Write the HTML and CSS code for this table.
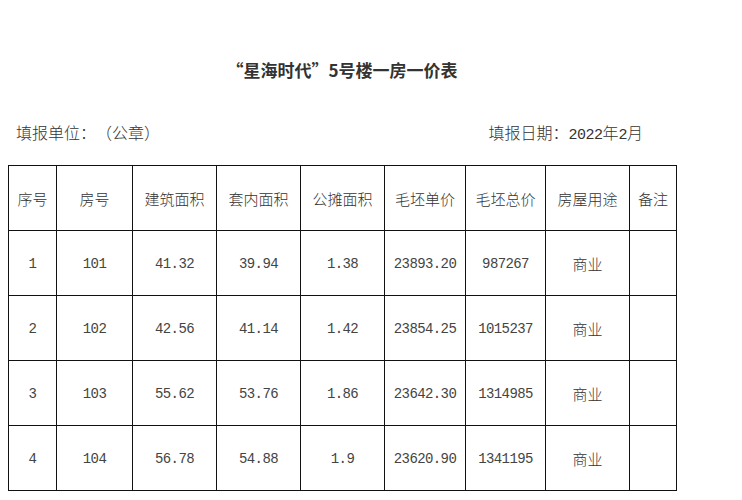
FILE: index.html
```html
<!DOCTYPE html>
<html lang="zh">
<head>
<meta charset="utf-8">
<link rel="stylesheet" href="styles.css">
</head>
<body>
<div class="page">
  <h1 class="title">“星海时代”5号楼一房一价表</h1>
  <div class="meta">
    <span>填报单位：（公章）</span>
    <span>填报日期：<span class="mnum">2022</span>年<span class="mnum">2</span>月</span>
  </div>
  <table class="grid">
    <colgroup>
      <col style="width:48px"><col style="width:76px"><col style="width:84px"><col style="width:84px"><col style="width:84px"><col style="width:81px"><col style="width:80px"><col style="width:84px"><col style="width:47px">
    </colgroup>
    <tr><th>序号</th><th>房号</th><th>建筑面积</th><th>套内面积</th><th>公摊面积</th><th>毛坯单价</th><th>毛坯总价</th><th>房屋用途</th><th>备注</th></tr>
    <tr><td class="num">1</td><td class="num">101</td><td class="num">41.32</td><td class="num">39.94</td><td class="num">1.38</td><td class="num">23893.20</td><td class="num">987267</td><td>商业</td><td></td></tr>
    <tr><td class="num">2</td><td class="num">102</td><td class="num">42.56</td><td class="num">41.14</td><td class="num">1.42</td><td class="num">23854.25</td><td class="num">1015237</td><td>商业</td><td></td></tr>
    <tr><td class="num">3</td><td class="num">103</td><td class="num">55.62</td><td class="num">53.76</td><td class="num">1.86</td><td class="num">23642.30</td><td class="num">1314985</td><td>商业</td><td></td></tr>
    <tr><td class="num">4</td><td class="num">104</td><td class="num">56.78</td><td class="num">54.88</td><td class="num">1.9</td><td class="num">23620.90</td><td class="num">1341195</td><td>商业</td><td></td></tr>
  </table>
</div>
</body>
</html>
```
FILE: styles.css
```css
html, body {
  margin: 0;
  padding: 0;
  background: #fff;
}
body {
  font-family: "Noto Sans CJK SC", "Liberation Sans", sans-serif;
  color: #333;
  font-size: 15px;
  text-spacing-trim: space-all;
}
.page {
  width: 668px;
  margin-left: 8px;
  padding-top: 59px;
}
.title {
  margin: 0;
  text-align: center;
  font-size: 17px;
  font-weight: bold;
  line-height: 22px;
  color: #333;
}
.meta {
  display: flex;
  justify-content: space-between;
  margin-top: 40px;
  padding-left: 8px;
  padding-right: 33px;
  font-size: 16px;
  line-height: 22px;
  height: 22px;
  font-weight: 300;
}
.mnum {
  font-family: "Liberation Mono", monospace;
  font-size: 15px;
  letter-spacing: -0.5px;
}
.num {
  font-family: "Liberation Mono", monospace;
  font-size: 14px;
  letter-spacing: -0.6px;
  color: #444;
}
.grid {
  margin-top: 22px;
  border-collapse: collapse;
  table-layout: fixed;
  width: 668px;
}
.grid tr {
  height: 65px;
}
.grid th, .grid td {
  border: 1px solid #111;
  padding: 0;
  text-align: center;
  vertical-align: middle;
  font-weight: 300;
  color: #333;
}
.grid td.num {
  color: #444;
  font-weight: normal;
  padding-top: 2px;
}
.grid th {
  font-size: 15px;
}
```
